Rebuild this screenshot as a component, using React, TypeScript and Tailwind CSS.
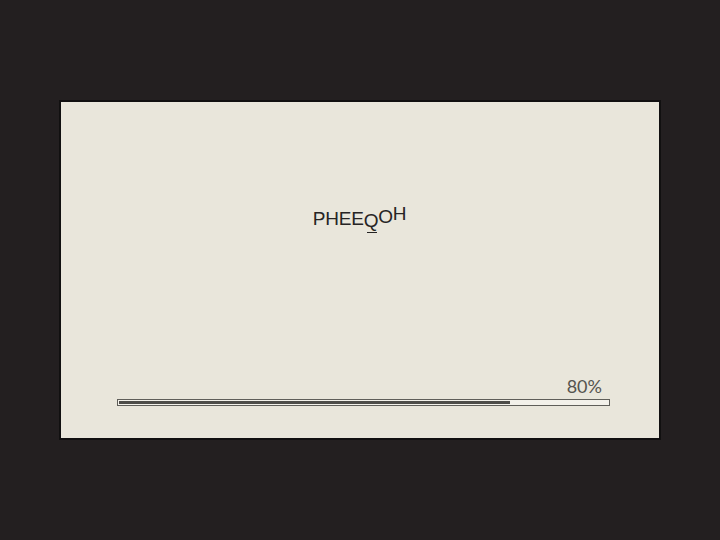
import React from "react";

export default function App() {
  const progress = 80;
  return (
    <div className="w-[720px] h-[540px] bg-[#231f20] flex items-center justify-center">
      <div className="w-[602px] h-[340px] bg-[#e9e6db] border-2 border-[#111010] flex flex-col">
        <div className="mt-[107px] flex justify-center">
          <div
            className="flex items-end text-[19px] font-medium text-[#262424] leading-none tracking-[-0.2px] ml-[-1px]"
            style={{ fontFamily: '"Liberation Sans", Arial, sans-serif' }}
          >
            <span>P</span>
            <span>H</span>
            <span>E</span>
            <span>E</span>
            <span className="relative inline-block translate-y-[2px]">
              Q
              <span className="absolute left-[3px] right-[1px] bottom-[-3px] h-[1.5px] bg-[#262424]" />
            </span>
            <span className="inline-block -translate-y-[2px]">O</span>
            <span className="inline-block -translate-y-[5px]">H</span>
          </div>
        </div>
        <div className="flex-1" />
        <div className="ml-[56px] w-[493px] mb-[32px] flex flex-col">
          <div
            className="self-end mr-[8px] text-[18px] font-normal text-[#55544f] leading-none mb-[4px]"
            style={{ fontFamily: 'Lato, "Liberation Sans", sans-serif' }}
          >
            {progress}%
          </div>
          <div className="h-[7px] border border-[#5f5e59] bg-[#f3f1ea] p-[1px]">
            <div className="h-full bg-[#4d4c48]" style={{ width: `${progress}%` }} />
          </div>
        </div>
      </div>
    </div>
  );
}
